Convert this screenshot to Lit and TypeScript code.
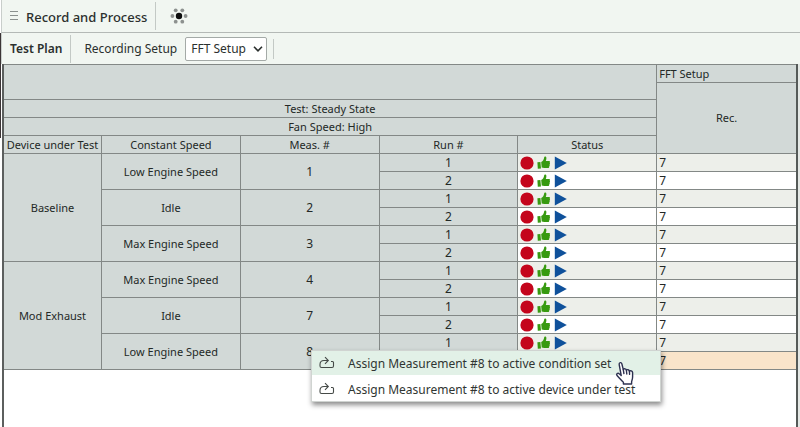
import { LitElement, html, css, svg, nothing } from "lit";
import { customElement, property, state } from "lit/decorators.js";
import { classMap } from "lit/directives/class-map.js";

interface Measurement {
  speed: string;
  id: number;
}

interface Device {
  name: string;
  measurements: Measurement[];
}

const DEVICES: Device[] = [
  {
    name: "Baseline",
    measurements: [
      { speed: "Low Engine Speed", id: 1 },
      { speed: "Idle", id: 2 },
      { speed: "Max Engine Speed", id: 3 },
    ],
  },
  {
    name: "Mod Exhaust",
    measurements: [
      { speed: "Max Engine Speed", id: 4 },
      { speed: "Idle", id: 7 },
      { speed: "Low Engine Speed", id: 8 },
    ],
  },
];

const RUNS = [1, 2];

@customElement("status-icons")
class StatusIcons extends LitElement {
  static styles = css`
    :host {
      display: flex;
      align-items: center;
      height: 17px;
      padding-left: 2px;
    }
    .icon {
      display: block;
      width: 14px;
      height: 14px;
      margin-right: 3px;
    }
  `;

  render() {
    return html`
      <svg class="icon" viewBox="0 0 14 14" aria-label="Recorded">
        <circle cx="7" cy="7" r="6.6" fill="#c4051c" />
      </svg>
      <svg class="icon" viewBox="0 0 14 14" aria-label="Accepted">
        <path
          d="M0.4 6.2L3.4 5.9L4 12.4L0.8 12.7ZM4.2 6C6 5 6.9 3.6 7.2 1.2C7.4 0.2 9.3 0.4 9.4 2.1C9.5 3.2 9.1 4.2 8.8 5H12C13.2 5 13.4 6.4 12.6 6.8C13.3 7.2 13.1 8.5 12.5 8.7C12.9 9.2 12.7 10.3 12.1 10.5C12.4 11.2 12 12.1 11 12.1H7.2C6.4 12.1 5.6 11.9 4.7 11.6Z"
          fill="#379a10"
        />
      </svg>
      <svg class="icon" viewBox="0 0 14 14" aria-label="Play">
        <path d="M0.8 0.6L12.8 7L0.8 13.4Z" fill="#0f519b" />
      </svg>
    `;
  }
}

@customElement("assign-menu")
class AssignMenu extends LitElement {
  @property({ type: Number }) measurement = 0;

  static styles = css`
    :host {
      display: block;
      background: #ffffff;
      border: 1px solid #d0d4d1;
      box-shadow: 1px 3px 5px rgba(0, 0, 0, 0.45);
    }
    .list {
      display: grid;
      gap: 2px;
    }
    .item {
      display: flex;
      align-items: center;
      box-sizing: border-box;
      width: 100%;
      height: 24px;
      padding: 2px 12px 0 7px;
      gap: 13px;
      border: 0;
      background: transparent;
      color: #303532;
      font: 12px/22px "Noto Sans", "Open Sans", sans-serif;
      text-align: left;
      white-space: nowrap;
    }
    .item.active {
      background: #e2f1e7;
    }
    .icon {
      flex: none;
      width: 16px;
      height: 14px;
      margin-bottom: 5px;
    }
  `;

  private item(target: string, active: boolean) {
    return html`
      <button class=${classMap({ item: true, active })} role="menuitem">
        <svg class="icon" viewBox="0 0 16 14" fill="none" stroke="#454a47" stroke-width="1.1">
          <path
            d="M12 6.5H13.5Q14.5 6.5 14.5 7.5V11Q14.5 12.5 13 12.5H2.5Q1 12.5 1 11V9.5Q1 5.5 5 5.5H9"
          />
          <path d="M6 2.2L9.3 5.5L6 8.8" />
        </svg>
        Assign Measurement #${this.measurement} to active ${target}
      </button>
    `;
  }

  render() {
    return html`
      <div class="list" role="menu">
        ${this.item("condition set", true)} ${this.item("device under test", false)}
      </div>
    `;
  }
}

@customElement("plan-table")
class PlanTable extends LitElement {
  static styles = css`
    :host {
      display: block;
    }
    .plan {
      width: 100%;
      table-layout: fixed;
      border-collapse: separate;
      border-spacing: 0;
      border-top: 1px solid #838886;
      color: #232826;
      font: 11px/16px "Noto Sans", "Open Sans", sans-serif;
    }
    .device-col {
      width: 98px;
    }
    .row {
      height: 18px;
    }
    .row.short {
      height: 17px;
    }
    .cell {
      padding: 0;
      border-right: 1px solid #838886;
      border-bottom: 1px solid #838886;
      background: #d2d9d7;
      font-weight: 400;
      text-align: center;
      white-space: nowrap;
    }
    .cell.last {
      border-right: 0;
    }
    .cell.left {
      padding-left: 2px;
      text-align: left;
    }
    .cell.number {
      font-size: 12px;
    }
    .cell.odd {
      background: #edefea;
    }
    .cell.even {
      background: #ffffff;
    }
    .cell.selected {
      background: #f9e4ca;
    }
  `;

  private runRow(device: Device, m: Measurement, first: boolean, run: number) {
    const runs = RUNS.length;
    const odd = run === 1;
    return html`
      <tr class="row">
        ${first && odd
          ? html`<th class="cell" scope="rowgroup" rowspan=${device.measurements.length * runs}>
              ${device.name}
            </th>`
          : nothing}
        ${odd
          ? html`<td class="cell" rowspan=${runs}>${m.speed}</td>
              <td class="cell number" rowspan=${runs}>${m.id}</td>`
          : nothing}
        <td class="cell number">${run}</td>
        <td class=${classMap({ cell: true, odd, even: !odd })}><status-icons></status-icons></td>
        <td
          class=${classMap({
            cell: true,
            number: true,
            last: true,
            left: true,
            odd,
            even: !odd,
            selected: m.id === 8 && !odd,
          })}
        >
          7
        </td>
      </tr>
    `;
  }

  render() {
    return html`
      <table class="plan">
        <colgroup>
          <col class="device-col" />
          <col span="5" />
        </colgroup>
        <thead>
          <tr class="row">
            <td class="cell" colspan="5" rowspan="2"></td>
            <th class="cell last left">FFT Setup</th>
          </tr>
          <tr class="row short">
            <th class="cell last" rowspan="4">Rec.</th>
          </tr>
          <tr class="row">
            <th class="cell" colspan="5">Test: Steady State</th>
          </tr>
          <tr class="row">
            <th class="cell" colspan="5">Fan Speed: High</th>
          </tr>
          <tr class="row">
            <th class="cell">Device under Test</th>
            <th class="cell">Constant Speed</th>
            <th class="cell">Meas. #</th>
            <th class="cell">Run #</th>
            <th class="cell">Status</th>
          </tr>
        </thead>
        <tbody>
          ${DEVICES.map((d) =>
            d.measurements.map((m, i) => RUNS.map((run) => this.runRow(d, m, i === 0, run)))
          )}
        </tbody>
      </table>
    `;
  }
}

@customElement("app-root")
class AppRoot extends LitElement {
  @state() private menuFor = 8;

  static styles = css`
    :host {
      display: flex;
      flex-direction: column;
      position: relative;
      min-height: 100vh;
      overflow: hidden;
      background: #ffffff;
      color: #2b302e;
      font: 12px/18px "Noto Sans", "Open Sans", sans-serif;
    }
    .bar {
      display: flex;
      align-items: center;
      box-sizing: border-box;
      height: 31px;
      margin-left: 1px;
      padding-left: 8px;
      border-left: 1px solid #c9cecb;
      background: #f1f6f1;
    }
    .bar.title {
      height: 33px;
      border-bottom: 1px solid #b4b9b6;
    }
    .heading {
      margin: 0;
      font-size: 12px;
      line-height: 18px;
      font-weight: 600;
    }
    .title .heading {
      margin: 2px 8px 0 7px;
      font-size: 13px;
      font-weight: 500;
    }
    .tools .heading {
      margin-right: 8px;
    }
    .rule {
      width: 1px;
      height: 28px;
      background: #c3c9c5;
    }
    .rule.small {
      height: 20px;
    }
    .label {
      margin: 0 8px 0 13px;
    }
    .grip {
      width: 9px;
      height: 12px;
    }
    .hub {
      width: 18px;
      height: 18px;
      margin-left: 14px;
    }
    .picker {
      display: grid;
      align-items: center;
      margin-right: 6px;
    }
    .select {
      grid-area: 1 / 1;
      box-sizing: border-box;
      width: 82px;
      height: 24px;
      padding: 0 16px 0 5px;
      appearance: none;
      border: 1px solid #a4aaa7;
      border-radius: 2px;
      background: #ffffff;
      color: #2b302e;
      font: 12px/18px "Noto Sans", "Open Sans", sans-serif;
    }
    .chevron {
      grid-area: 1 / 1;
      justify-self: end;
      width: 10px;
      height: 8px;
      margin-right: 4px;
      pointer-events: none;
    }
    .body {
      display: flex;
      flex: 1;
      margin-left: 2px;
      border-left: 2px solid #5c5f5e;
    }
    .plan {
      flex: 1;
      min-width: 0;
    }
    .side {
      width: 2px;
      border-left: 2px solid #555a58;
      background: #e4e8e5;
    }
    .menu {
      position: absolute;
      left: 311px;
      top: 350px;
      width: 348px;
    }
    .hand {
      position: absolute;
      left: 615px;
      top: 361px;
      width: 20px;
      height: 25px;
    }
    .edge {
      position: absolute;
      left: 0;
      top: 33px;
      width: 1px;
      height: 105px;
      background: #3c3536;
    }
  `;

  private hub() {
    const spokes = [0, 60, 120, 180, 240, 300].map((deg) => {
      const a = (deg * Math.PI) / 180;
      return svg`<circle cx=${9 + 6.6 * Math.cos(a)} cy=${9 + 6.6 * Math.sin(a)} r="1.9" fill="#8d918f" />`;
    });
    return html`<svg class="hub" viewBox="0 0 18 18">
      ${spokes}
      <circle cx="9" cy="9" r="3.2" fill="#0c0d0d" />
    </svg>`;
  }

  render() {
    return html`
      <header class="bar title">
        <svg class="grip" viewBox="0 0 9 12" stroke="#8b918e">
          <path d="M0 1.5H8M0 5.5H8M0 9.5H8" />
        </svg>
        <h1 class="heading">Record and Process</h1>
        <span class="rule"></span>
        ${this.hub()}
      </header>
      <nav class="bar tools">
        <h2 class="heading">Test Plan</h2>
        <span class="rule"></span>
        <label class="label" for="setup">Recording Setup</label>
        <span class="picker">
          <select class="select" id="setup">
            <option>FFT Setup</option>
          </select>
          <svg class="chevron" viewBox="0 0 10 8" fill="none" stroke="#2b302e" stroke-width="1.6">
            <path d="M1 1.8L5 5.8L9 1.8" />
          </svg>
        </span>
        <span class="rule small"></span>
      </nav>
      <main class="body">
        <plan-table class="plan"></plan-table>
        <div class="side"></div>
      </main>
      <span class="edge"></span>
      <assign-menu class="menu" .measurement=${this.menuFor}></assign-menu>
      <svg class="hand" viewBox="0 0 20 25" fill="#ffffff" stroke="#2d3150" stroke-width="1.4" stroke-linejoin="round" stroke-linecap="round">
        <path
          d="M6.2 14.5L4.2 3.6C3.8 1.4 6.4 0.9 6.9 3L8.3 8.6C8.8 7.4 11.2 7.6 11.4 9.2C12.1 8.2 14.2 8.6 14.4 10.1C15.4 9.3 17.4 9.8 17.6 11.6V16C17.6 18.5 16.6 19.5 16.6 21V23H8.4V21.2C6.2 19.4 4 16.6 2 14.6C0.9 13 2.8 11.5 4.2 12.8L6.2 14.5"
        />
        <path d="M8.3 8.6L8.9 12.6M11.4 9.2L11.8 13M14.4 10.1L14.6 13.4" />
      </svg>
    `;
  }
}
